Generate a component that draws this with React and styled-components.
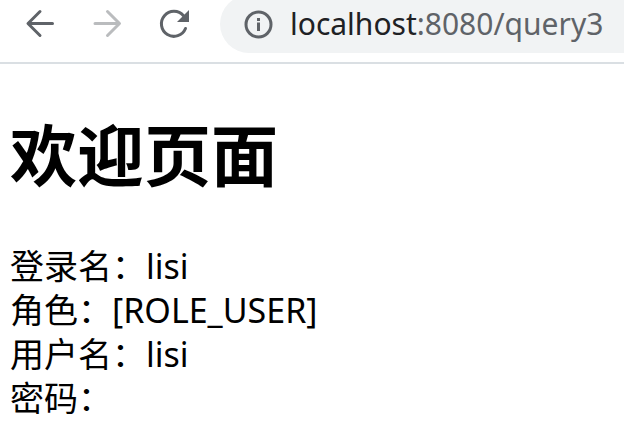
import React from "react";
import styled, { createGlobalStyle } from "styled-components";

const GlobalStyle = createGlobalStyle`
  * { box-sizing: border-box; }
  body {
    margin: 0;
    background: #fff;
    color: #000;
    overflow: hidden;
    font-family: "Noto Sans", "Noto Sans CJK SC", sans-serif;
  }
`;

const Toolbar = styled.header`
  display: flex;
  align-items: flex-start;
  height: 64px;
  padding-left: 20px;
  overflow: hidden;
  border-bottom: 2px solid #dadfe3;
`;

const NavButtons = styled.nav`
  display: flex;
  gap: 28px;
  padding-top: 4px;
`;

const IconButton = styled.button`
  display: flex;
  width: 40px;
  height: 40px;
  padding: 0;
  border: 0;
  background: none;
  color: #5f6368;
  &:disabled { color: #babcbe; }
`;

const Icon = styled.svg`
  flex: none;
  fill: none;
  stroke: currentColor;
  stroke-width: 3;
  stroke-linecap: round;
  stroke-linejoin: round;
`;

const AddressBar = styled.div`
  display: flex;
  flex: 1;
  align-items: center;
  gap: 16px;
  height: 58px;
  margin: -5px 0 0 24px;
  padding-left: 24px;
  border-radius: 29px 0 0 29px;
  background: #f1f3f4;
  color: #5f6368;
`;

const Address = styled.span`
  font-size: 30px;
  line-height: 44px;
  white-space: nowrap;
`;

const Host = styled.span`
  color: #202124;
`;

const Page = styled.main`
  padding: 45px 10px 0;
`;

const Title = styled.h1`
  margin: 0 0 43px;
  font-size: 67px;
  line-height: 92px;
  font-weight: 700;
`;

const Line = styled.p`
  margin: 0;
  font-size: 34px;
  line-height: 44px;
`;

const details = ["登录名：lisi", "角色：[ROLE_USER]", "用户名：lisi", "密码："];

export default function App() {
  return (
    <>
      <GlobalStyle />
      <Toolbar>
        <NavButtons>
          <IconButton aria-label="Back">
            <Icon width="40" height="40" viewBox="0 0 40 40">
              <path d="M32.5 19.5H8.5M20 7.5L8 19.5L20 31.5" />
            </Icon>
          </IconButton>
          <IconButton aria-label="Forward" disabled>
            <Icon width="40" height="40" viewBox="0 0 40 40">
              <path d="M7 19.5H31M19.5 7.5L31.5 19.5L19.5 31.5" />
            </Icon>
          </IconButton>
          <IconButton aria-label="Reload">
            <Icon width="40" height="40" viewBox="0 0 40 40">
              <path d="M29.5 24.5A12.5 12.5 0 1 1 27.5 11.8" />
              <path d="M33 6V18H21Z" fill="currentColor" stroke="none" />
            </Icon>
          </IconButton>
        </NavButtons>
        <AddressBar>
          <Icon width="30" height="30" viewBox="0 0 30 30" role="img" aria-label="Site information">
            <circle cx="14.5" cy="15.5" r="12.5" />
            <path d="M13 13.5H16V22H13ZM13 9H16V12H13Z" fill="currentColor" stroke="none" />
          </Icon>
          <Address><Host>localhost</Host>:8080/query3</Address>
        </AddressBar>
      </Toolbar>
      <Page>
        <Title>欢迎页面</Title>
        {details.map((text) => <Line key={text}>{text}</Line>)}
      </Page>
    </>
  );
}
